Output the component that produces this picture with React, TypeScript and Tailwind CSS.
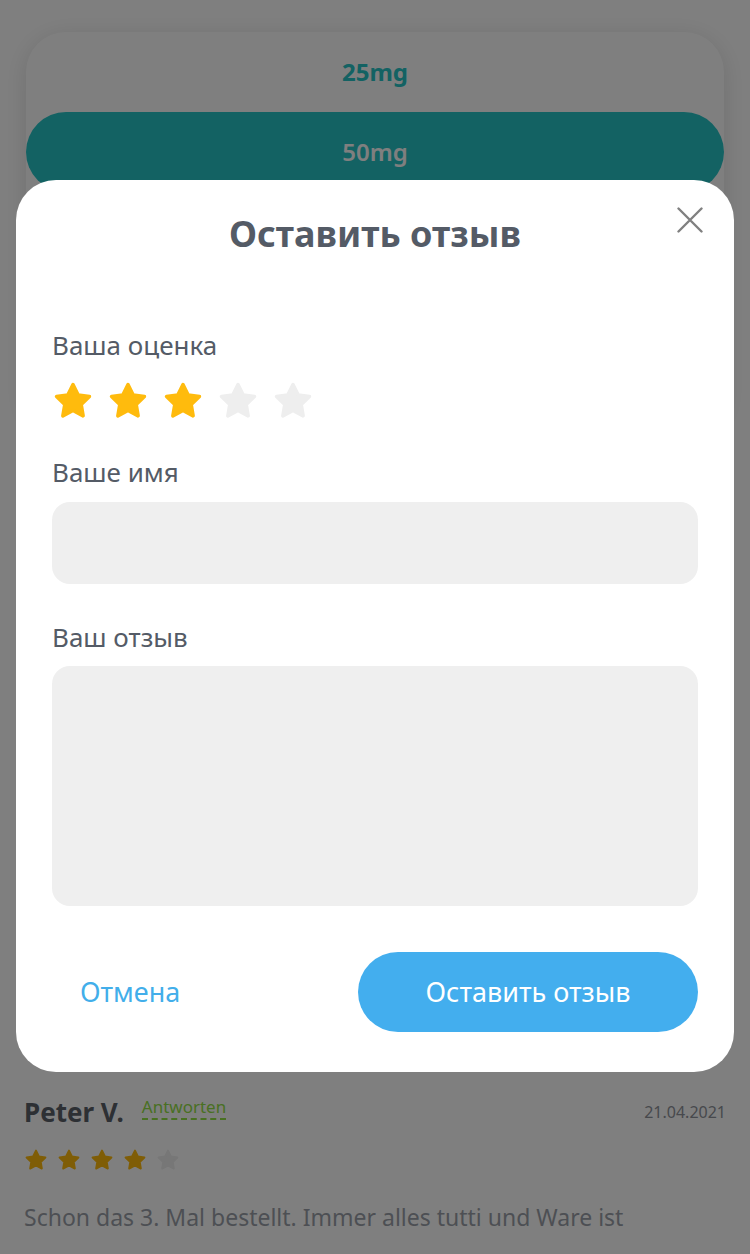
import { useState } from 'react'

const FONT = { fontFamily: '"Noto Sans", "Open Sans", sans-serif' }

function Star({ filled, size, className = '' }: { filled: boolean; size: number; className?: string }) {
  const color = filled ? '#ffbb0d' : '#eeeeee'
  return (
    <svg width={size} height={size} viewBox="0 0 24 24" className={className}>
      <path
        d="M12 2.6l2.9 5.9 6.5.95-4.7 4.58 1.1 6.47L12 17.45l-5.8 3.05 1.1-6.47-4.7-4.58 6.5-.95L12 2.6z"
        fill={color}
        stroke={color}
        strokeWidth={2}
        strokeLinejoin="round"
      />
    </svg>
  )
}

function Page() {
  return (
    <div className="bg-white min-h-[1254px]">
      {/* dosage picker, mostly hidden behind the modal */}
      <div className="h-[1090px] pt-8 px-[26px]">
        <div className="rounded-[40px] bg-white shadow-[0_4px_24px_rgba(0,0,0,0.12)] h-[400px]">
          <div className="h-[80px] flex items-center justify-center text-[24px] font-bold text-[#26c4c6]">
            25mg
          </div>
          <div className="h-[80px] rounded-full bg-[#26c4c6] flex items-center justify-center text-[24px] font-semibold text-white">
            50mg
          </div>
        </div>
      </div>

      {/* review */}
      <div className="px-6">
        <div className="flex items-start justify-between">
          <div className="flex items-start gap-[18px]">
            <span className="text-[26px] font-bold text-[#5a6069] leading-[44px]">Peter V.</span>
            <span className="mt-[6px] text-[17px] leading-[22px] text-[#92e046] border-b-2 border-dashed border-[#92e046]">
              Antworten
            </span>
          </div>
          <span className="mt-[10px] text-[16px] text-[#8e929a]">21.04.2021</span>
        </div>
        <div className="flex gap-[9px] mt-[14px]">
          {[0, 1, 2, 3, 4].map((i) => (
            <Star key={i} filled={i < 4} size={24} />
          ))}
        </div>
        <p className="mt-[17px] w-[620px] text-[23px] leading-[56px] text-[#9a9fa8]">
          Schon das 3. Mal bestellt. Immer alles tutti und Ware ist einwandfrei!
        </p>
      </div>
    </div>
  )
}

export default function App() {
  const [rating, setRating] = useState(3)

  return (
    <div className="relative w-[750px] h-[1254px] overflow-hidden" style={FONT}>
      <Page />

      {/* overlay */}
      <div className="absolute inset-0 bg-black/50" />

      {/* modal */}
      <div className="absolute left-4 right-4 top-[180px] rounded-[40px] bg-white px-9 pt-[34px] pb-10">
        <button className="absolute right-[31px] top-[27px] text-[#808080]">
          <svg width="26" height="26" viewBox="0 0 26 26">
            <path d="M1.5 1.5l23 23M24.5 1.5l-23 23" stroke="currentColor" strokeWidth="2.4" strokeLinecap="round" />
          </svg>
        </button>

        <h2 className="text-center text-[36px] leading-[40px] font-bold text-[#545b66]">Оставить отзыв</h2>

        <div className="mt-[75px] text-[26px] leading-[32px] text-[#545b66]">Ваша оценка</div>
        <div className="mt-[19px] flex gap-[13px]">
          {[1, 2, 3, 4, 5].map((n) => (
            <button key={n} onClick={() => setRating(n)}>
              <Star filled={n <= rating} size={42} />
            </button>
          ))}
        </div>

        <div className="mt-[34px] text-[26px] leading-[32px] text-[#545b66]">Ваше имя</div>
        <input className="mt-[14px] block w-full h-[82px] rounded-[18px] bg-[#efefef] px-6 text-[24px] outline-none" />

        <div className="mt-[37px] text-[26px] leading-[32px] text-[#545b66]">Ваш отзыв</div>
        <textarea className="mt-[13px] block w-full h-[240px] rounded-[18px] bg-[#efefef] p-6 text-[24px] outline-none resize-none" />

        <div className="mt-[46px] flex items-center justify-between">
          <button className="pl-7 text-[27px] text-[#42aeea]">Отмена</button>
          <button className="w-[340px] h-[80px] rounded-full bg-[#43aeee] text-[27px] text-white">
            Оставить отзыв
          </button>
        </div>
      </div>
    </div>
  )
}
